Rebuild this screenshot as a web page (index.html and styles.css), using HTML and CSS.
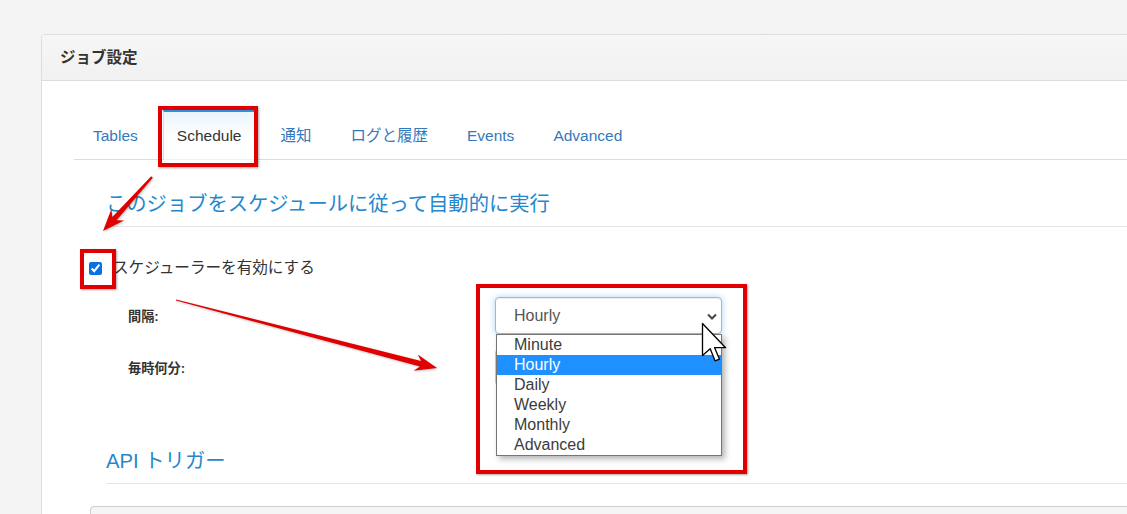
FILE: index.html
```html
<!DOCTYPE html>
<html lang="ja">
<head>
    <meta charset="UTF-8">
    <meta name="viewport" content="width=device-width, initial-scale=1.0">
    <title>ジョブ設定</title>
    <link rel="stylesheet" href="styles.css">
</head>
<body>
    <div class="page">
        <div class="panel">
            <div class="panel-heading">ジョブ設定</div>
            <div class="panel-body">
                <!-- Tabs -->
                <ul class="nav-tabs">
                    <li><a href="#">Tables</a></li>
                    <li class="active"><a href="#">Schedule</a></li>
                    <li><a href="#">通知</a></li>
                    <li><a href="#">ログと履歴</a></li>
                    <li><a href="#">Events</a></li>
                    <li><a href="#">Advanced</a></li>
                </ul>

                <h4 class="legend">このジョブをスケジュールに従って自動的に実行</h4>

                <label class="check-row">
                    <input type="checkbox" checked>
                    <span>スケジューラーを有効にする</span>
                </label>

                <div class="form-row">
                    <div class="form-label">間隔:</div>
                    <div class="select-wrap">
                        <select class="form-select focused">
                            <option>Minute</option>
                            <option selected>Hourly</option>
                            <option>Daily</option>
                            <option>Weekly</option>
                            <option>Monthly</option>
                            <option>Advanced</option>
                        </select>
                        <svg class="chevron" width="10" height="7" viewBox="0 0 10 7">
                            <path d="M1 1.5 L5 5.5 L9 1.5" fill="none" stroke="#444" stroke-width="2"/>
                        </svg>
                        <ul class="dropdown-list">
                            <li>Minute</li>
                            <li class="highlight">Hourly</li>
                            <li>Daily</li>
                            <li>Weekly</li>
                            <li>Monthly</li>
                            <li>Advanced</li>
                        </ul>
                        <svg class="cursor" width="27" height="40" viewBox="0 0 27 40">
                            <path d="M1.5 1.5 L1.5 33.5 L9.2 26.8 L14.1 38.9 L18.5 37.2 L13.6 25.7 L24.6 25.7 Z" fill="#fff" stroke="#000" stroke-width="1.3" stroke-linejoin="round"/>
                        </svg>
                    </div>
                </div>

                <div class="form-row">
                    <div class="form-label">毎時何分:</div>
                    <div class="select-wrap">
                        <select class="form-select">
                            <option>0</option>
                        </select>
                    </div>
                </div>

                <h4 class="legend api">API トリガー</h4>

                <div class="well"></div>
            </div>
        </div>
    </div>

    <!-- red annotations on top of the screenshot -->
    <div class="annotations">
        <div class="mark mark-tab"></div>
        <div class="mark mark-check"></div>
        <div class="mark mark-select"></div>
        <svg class="arrows" width="1127" height="514" viewBox="0 0 1127 514">
            <polygon points="151.2,176.2 112.3,216.9 111.4,208.9 103,231 124.1,220.6 116.6,220.3 152.8,177.8" fill="#e00000"/>
            <polygon points="176.1,299.4 421.1,360.9 417.7,354.4 437,368 413.6,370.8 419.9,366.5 175.9,300.6" fill="#e00000"/>
        </svg>
    </div>
</body>
</html>
```

FILE: styles.css
```css
body {
    margin: 0;
    padding: 0;
    position: relative;
    background-color: #f4f4f4;
    font-family: "Liberation Sans", Arial, "Noto Sans CJK JP", sans-serif;
    color: #333;
}
.page {
    height: 514px;
    box-sizing: border-box;
    padding: 34px 0 0 41px;
    overflow: hidden;
}
.panel {
    background-color: #fff;
    border: 1px solid #ddd;
    border-radius: 4px;
    margin-right: -20px;
    height: 600px;
}
.panel-heading {
    height: 46px;
    box-sizing: border-box;
    display: flex;
    align-items: center;
    padding: 0 18px 3px;
    background: linear-gradient(#f6f6f6, #f1f1f1);
    border-bottom: 1px solid #ddd;
    border-radius: 3px 3px 0 0;
    font-size: 15.5px;
    font-weight: bold;
    color: #333;
}
.panel-body {
    padding: 29px 0 0 32px;
}

/* tabs */
.nav-tabs {
    display: flex;
    list-style: none;
    margin: 0;
    padding: 0 0 0 5px;
    border-bottom: 1px solid #ddd;
}
.nav-tabs li {
    margin-right: 11px;
    margin-bottom: -1px;
}
.nav-tabs a {
    display: block;
    padding: 13px 13px;
    line-height: 21px;
    font-size: 15.5px;
    color: #3479bb;
    text-decoration: none;
    border: 1px solid transparent;
    border-top-width: 2px;
}
.nav-tabs .active a {
    color: #333;
    border-color: #ddd #ddd transparent;
    border-top-color: #2f8fdf;
    background: linear-gradient(#eaf4fc, #fff 55%);
}

/* section titles */
.legend {
    margin: 33px 0 0 32px;
    padding-bottom: 11px;
    border-bottom: 1px solid #e5e5e5;
    font-size: 20.3px;
    line-height: 22px;
    font-weight: normal;
    color: #2588cf;
}
.legend.api {
    margin-top: 64px;
}

.check-row {
    display: flex;
    align-items: center;
    margin: 30px 0 0 15px;
    line-height: 22px;
    font-size: 15.6px;
    color: #333;
}
.check-row input {
    width: 13px;
    height: 13px;
    margin: 0 11px 0 0;
    accent-color: #0b6fe6;
}

/* form rows */
.form-row {
    display: grid;
    grid-template-columns: 367px 227px;
    align-items: center;
    margin: 18px 0 0 54px;
}
.form-row + .form-row {
    margin-top: 15px;
}
.form-label {
    font-size: 13.2px;
    font-weight: bold;
    color: #333;
}
.select-wrap {
    position: relative;
}
.form-select {
    appearance: none;
    -webkit-appearance: none;
    display: block;
    width: 227px;
    height: 37px;
    padding: 0 0 0 18px;
    border: 1px solid #ccc;
    border-radius: 4px;
    background-color: #fff;
    font-family: "Liberation Sans", Arial, sans-serif;
    font-size: 16px;
    color: #555;
    box-shadow: inset 0 1px 1px rgba(0,0,0,0.075);
}
.form-select.focused {
    border-color: #8dbfe9;
    box-shadow: inset 0 1px 1px rgba(0,0,0,0.075), 0 0 6px rgba(102,175,233,0.55);
}
.chevron {
    position: absolute;
    left: 212px;
    top: 16px;
}
.dropdown-list {
    position: absolute;
    z-index: 2;
    top: 37px;
    left: 1px;
    width: 226px;
    box-sizing: border-box;
    margin: 0;
    padding: 0;
    list-style: none;
    background-color: #fff;
    border: 1px solid #767676;
    box-shadow: 3px 3px 6px rgba(0,0,0,0.3);
}
.dropdown-list li {
    height: 20px;
    line-height: 20px;
    padding-left: 17px;
    font-size: 16px;
    color: #3c3c3c;
}
.dropdown-list li.highlight {
    background-color: #1e90ff;
    color: #fff;
}
.cursor {
    position: absolute;
    z-index: 3;
    left: 206px;
    top: 25px;
}

.well {
    margin: 22px 0 0 16px;
    height: 60px;
    background-color: #f5f5f5;
    border: 1px solid #ccc;
    border-radius: 4px;
}

/* annotations */
.annotations {
    position: absolute;
    top: 0;
    left: 0;
    width: 1127px;
    height: 514px;
    pointer-events: none;
    z-index: 5;
}
.arrows {
    position: absolute;
    top: 0;
    left: 0;
    filter: drop-shadow(1px 1px 1px rgba(0,0,0,0.25));
}
.mark {
    position: absolute;
    box-sizing: border-box;
    border: 4px solid #e00000;
    box-shadow: 1px 1px 2px rgba(0,0,0,0.35);
}
.mark-tab {
    left: 158px;
    top: 106px;
    width: 100px;
    height: 61px;
}
.mark-check {
    left: 80px;
    top: 249px;
    width: 36px;
    height: 40px;
}
.mark-select {
    left: 476px;
    top: 284px;
    width: 271px;
    height: 190px;
}
```
